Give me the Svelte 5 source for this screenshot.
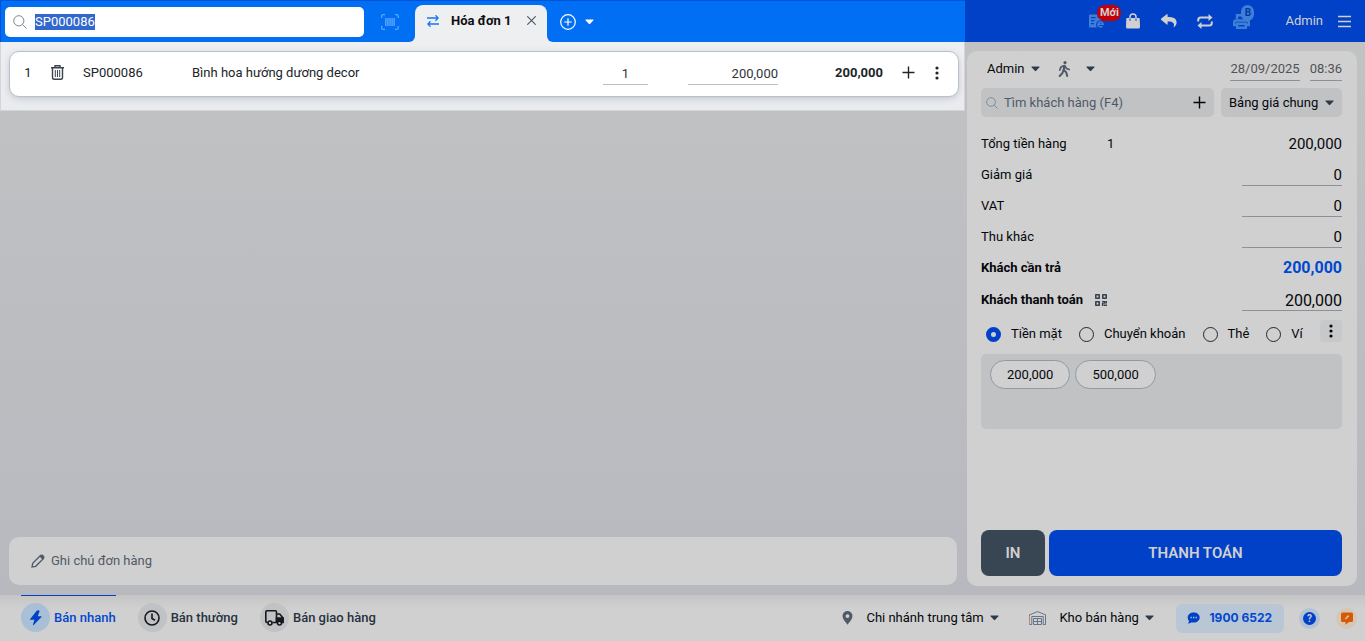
<script lang="ts">
	import { onMount } from 'svelte';

	let keyword: string = $state('SP000086');
	let customer: string = $state('');
	let note: string = $state('');
	let method: string = $state('cash');
	let mode: string = $state('fast');
	let paid: string = $state('200,000');
	let searchBox: HTMLInputElement;

	let item = $state({
		code: 'SP000086',
		name: 'Bình hoa hướng dương decor',
		qty: '1',
		price: '200,000',
		total: '200,000'
	});

	let extras = $state([
		{ id: 'discount', label: 'Giảm giá', value: '0' },
		{ id: 'vat', label: 'VAT', value: '0' },
		{ id: 'other', label: 'Thu khác', value: '0' }
	]);

	const methods = [
		{ id: 'cash', label: 'Tiền mặt' },
		{ id: 'transfer', label: 'Chuyển khoản' },
		{ id: 'card', label: 'Thẻ' },
		{ id: 'wallet', label: 'Ví' }
	];

	const suggestions = ['200,000', '500,000'];

	const modes = [
		{ id: 'fast', label: 'Bán nhanh' },
		{ id: 'normal', label: 'Bán thường' },
		{ id: 'delivery', label: 'Bán giao hàng' }
	];

	onMount(() => {
		searchBox.focus();
		searchBox.select();
	});
</script>

{#snippet caret()}
	<svg class="caret" width="9" height="6" viewBox="0 0 9 6" aria-hidden="true">
		<path d="M1 0.5h7q1 0 .4.8L5.2 4.8q-.7.7-1.4 0L.6 1.3Q0 .5 1 .5z" fill="currentColor" />
	</svg>
{/snippet}

{#snippet magnifier(size: number)}
	<svg width={size} height={size} viewBox="0 0 14 14" fill="none" stroke="#7b8492" aria-hidden="true">
		<circle cx="5.8" cy="5.8" r="5.1" />
		<path d="M9.5 9.5l4 4" />
	</svg>
{/snippet}

{#snippet dots()}
	<svg width="4" height="14" viewBox="0 0 4 14" fill="currentColor" aria-hidden="true">
		<circle cx="2" cy="2" r="1.6" />
		<circle cx="2" cy="7" r="1.6" />
		<circle cx="2" cy="12" r="1.6" />
	</svg>
{/snippet}

{#snippet plus()}
	<svg width="13" height="13" viewBox="0 0 13 13" stroke="currentColor" stroke-width="1.4" aria-hidden="true">
		<path d="M6.5 0.5v12M0.5 6.5h12" />
	</svg>
{/snippet}

<div class="page">
	<header>
		<div class="bar">
			<div class="bar-search">
				<label class="search">
					{@render magnifier(14)}
					<input bind:this={searchBox} bind:value={keyword} aria-label="Tìm hàng hóa" />
				</label>
				<button class="scan" aria-label="Quét mã vạch">
					<svg width="18" height="16" viewBox="0 0 18 16" fill="none" stroke="#5ba6ff" aria-hidden="true">
						<path d="M.7 4V2.2Q.7.7 2.2.7H4M14 .7h1.800q1.500 0 1.500 1.500V4M17.300 12v1.800q0 1.500-1.500 1.500H14M4 15.300H2.200q-1.500 0-1.500-1.500V12" stroke-width="1.3" />
						<path d="M4.800 4v8M6.900 4v8M9 4v8M11.100 4v8M13.200 4v8" stroke-width="1.4" />
					</svg>
				</button>
			</div>
			<div class="tab-slot">
				<div class="tab">
					<svg width="12" height="12" viewBox="0 0 12 12" fill="none" stroke="#1a76f2" stroke-width="1.3" aria-hidden="true">
						<path d="M0 3h11.200M8.500.3l2.700 2.700-2.700 2.700M12 9H.8M3.500 6.300L.8 9l2.700 2.700" />
					</svg>
					<strong>Hóa đơn 1</strong>
					<button class="plain" aria-label="Đóng">
						<svg width="9" height="9" viewBox="0 0 9 9" stroke="#4b5560" stroke-width="1.1" aria-hidden="true">
							<path d="M.3.3l8.400 8.400M8.700.3L.3 8.700" />
						</svg>
					</button>
				</div>
			</div>
			<div class="bar-rest">
				<button class="plain" aria-label="Thêm hóa đơn">
					<svg width="16" height="16" viewBox="0 0 16 16" fill="none" stroke="#fff" stroke-width="1.2" aria-hidden="true">
						<circle cx="8" cy="8" r="7.300" />
						<path d="M8 4.200v7.600M4.200 8h7.600" />
					</svg>
				</button>
				<button class="plain" aria-label="Chọn loại hóa đơn">{@render caret()}</button>
			</div>
		</div>

		<div class="tools">
			<button class="tool" aria-label="Hóa đơn điện tử">
				<svg width="16" height="14" viewBox="0 0 16 14" fill="#3f7fd6" aria-hidden="true">
					<path d="M1 .5h6.500q1 0 1 1V4H12v2.200A4.500 4.500 0 0 0 8 13.500H1q-1 0-1-1v-11q0-1 1-1zM2 3v1.200h4.500V3zM2 6v1.200h3.500V6zM2 9v1.200h3V9z" fill-rule="evenodd" />
					<path d="M9 10.300h5.200a2.600 2.600 0 1 0-.7 2" fill="none" stroke="#3f7fd6" stroke-width="1.500" />
				</svg>
				<span class="badge new">Mới</span>
			</button>
			<button class="tool" aria-label="Đặt hàng">
				<svg width="14" height="16" viewBox="0 0 14 16" aria-hidden="true">
					<path d="M1 5h12q.6 0 .7.700L14 14q0 1.500-1.500 1.500h-11Q0 15.500 0 14l.3-8.300Q.4 5 1 5z" fill="#d0d0d0" />
					<path d="M4 7.500V4a3 3 0 0 1 6 0v3.500" fill="none" stroke="#d0d0d0" stroke-width="1.500" />
					<path d="M4 5.500v2.300M10 5.500v2.300" stroke="#0041c8" />
				</svg>
			</button>
			<button class="tool" aria-label="Trả hàng">
				<svg width="16" height="14" viewBox="0 0 16 14" fill="#d0d0d0" aria-hidden="true">
					<path d="M.3 4.500L5.800.2q.8-.5.8.5V3c5 0 9 1 9 5.500 0 2-1.200 3.700-2.500 4.700q-.6.400-.4-.4C14 8.500 11 7.500 6.600 7.500V10q0 1-.8.400L.3 6q-.8-.7 0-1.500z" />
				</svg>
			</button>
			<button class="tool" aria-label="Đồng bộ">
				<svg width="16" height="15" viewBox="0 0 16 15" fill="none" stroke="#d0d0d0" stroke-width="2" aria-hidden="true">
					<path d="M1.200 7.500V6q0-2.500 2.500-2.500H12M14.800 7.500V9q0 2.500-2.500 2.500H4" />
					<path d="M11.500 0L15.500 3.500l-4 3.500zM4.500 8L.5 11.500l4 3.500z" fill="#d0d0d0" stroke="none" />
				</svg>
			</button>
			<button class="tool" aria-label="In tự động">
				<svg width="17" height="15" viewBox="0 0 17 15" fill="none" stroke="#3f7fd6" stroke-width="2.400" aria-hidden="true">
					<path d="M4 5V1.200h6" />
					<path d="M4 11H1.200V8.500q0-2 2-2h10.600q2 0 2 2V11h-3M4.200 9.800h8.600v3.900H4.200z" />
				</svg>
				<span class="badge print">B</span>
			</button>
			<span class="user">Admin</span>
			<button class="plain" aria-label="Menu">
				<svg width="13" height="13" viewBox="0 0 13 13" stroke="#d0d0d0" stroke-width="1.500" aria-hidden="true">
					<path d="M0 1.500h13M0 6.500h13M0 11.500h13" />
				</svg>
			</button>
		</div>
	</header>

	<main>
		<section class="order">
			<div class="cart">
				<div class="line">
					<span class="no">1</span>
					<button class="plain" aria-label="Xóa">
						<svg width="13" height="15" viewBox="0 0 13 15" fill="none" stroke="#3b434d" aria-hidden="true">
							<path d="M0 2.700h13M4 2.500V.8h5v1.700" stroke-width="1.400" />
							<path d="M1.500 3v9.500q0 1.800 1.800 1.800h6.400q1.800 0 1.800-1.800V3" stroke-width="1.400" />
							<path d="M4.300 5v7M6.500 5v7M8.700 5v7" />
						</svg>
					</button>
					<span class="code">{item.code}</span>
					<span>{item.name}</span>
					<input class="qty" bind:value={item.qty} aria-label="Số lượng" />
					<input class="price" bind:value={item.price} aria-label="Đơn giá" />
					<strong class="total">{item.total}</strong>
					<span class="actions">
						<button class="plain" aria-label="Thêm dòng">{@render plus()}</button>
						<button class="plain" aria-label="Tùy chọn">{@render dots()}</button>
					</span>
				</div>
			</div>
			<div class="space"></div>
			<label class="note">
				<svg width="14" height="14" viewBox="0 0 14 14" fill="none" stroke="#505a66" stroke-width="1.300" aria-hidden="true">
					<path d="M1 13l.7-3.700L9.500 1.500l3 3-7.800 7.800z" />
					<path d="M8.500 2.500l3 3L13.200 3.800q.8-.8 0-1.600L11.800.8q-.8-.8-1.600 0z" fill="#505a66" stroke="none" />
				</svg>
				<input bind:value={note} placeholder="Ghi chú đơn hàng" aria-label="Ghi chú đơn hàng" />
			</label>
		</section>

		<aside>
			<div class="meta">
				<label class="pick">
					<select aria-label="Người bán"><option>Admin</option></select>
					{@render caret()}
				</label>
				<button class="plain channel" aria-label="Kênh bán">
					<svg width="12" height="16" viewBox="0 0 12 16" aria-hidden="true">
						<circle cx="7" cy="1.600" r="1.600" fill="#505a66" />
						<path d="M6.300 4.800L5.600 9l2.600 2.300L9.200 15M5.300 9.500L4.500 12l-2.800 3" fill="none" stroke="#505a66" stroke-width="2" stroke-linecap="round" />
						<path d="M6 4.800L3 6l-1.200 3M7 5.200l1.500 2.300 2.700 1" fill="none" stroke="#505a66" stroke-width="1.700" stroke-linecap="round" />
						<path d="M5.200 4.500h2.300l-.8 5H4.800z" fill="#505a66" />
					</svg>
					{@render caret()}
				</button>
				<button class="when">28/09/2025</button>
				<button class="when">08:36</button>
			</div>

			<div class="client">
				<label class="find">
					{@render magnifier(12)}
					<input bind:value={customer} placeholder="Tìm khách hàng (F4)" aria-label="Tìm khách hàng" />
					<button class="plain" aria-label="Thêm khách hàng">{@render plus()}</button>
				</label>
				<label class="pick book">
					<select aria-label="Bảng giá"><option>Bảng giá chung</option></select>
					{@render caret()}
				</label>
			</div>

			<div class="sums">
				<div class="row">
					<span class="first">Tổng tiền hàng</span>
					<span>1</span>
					<span class="amount">200,000</span>
				</div>
				{#each extras as extra (extra.id)}
					<div class="row">
						<label for={extra.id}>{extra.label}</label>
						<input id={extra.id} bind:value={extra.value} />
					</div>
				{/each}
				<div class="row due">
					<strong>Khách cần trả</strong>
					<strong class="amount">200,000</strong>
				</div>
				<div class="row paid">
					<label for="paid">Khách thanh toán</label>
					<svg width="12" height="12" viewBox="0 0 12 12" fill="none" stroke="#36424f" stroke-width="1.600" aria-hidden="true">
						<path d="M.8.800h3.400v3.400H.8zM7.800.800h3.400v3.400H7.800zM.8 7.800h3.400v3.400H.8z" stroke-linejoin="round" />
						<path d="M7 7.700h2.500v2M11.300 7v2.500M7.700 9v3M9 11.300h3" />
					</svg>
					<input id="paid" bind:value={paid} />
				</div>
			</div>

			<div class="methods">
				{#each methods as m (m.id)}
					<label>
						<input type="radio" name="method" value={m.id} bind:group={method} />
						{m.label}
					</label>
				{/each}
				<button class="more" aria-label="Thêm phương thức">{@render dots()}</button>
			</div>

			<div class="quick">
				{#each suggestions as amount}
					<button onclick={() => (paid = amount)}>{amount}</button>
				{/each}
			</div>

			<div class="submit">
				<button class="print-btn">IN</button>
				<button class="pay-btn">THANH TOÁN</button>
			</div>
		</aside>
	</main>

	<footer>
		<nav>
			{#each modes as m (m.id)}
				<button class="mode" class:active={mode === m.id} onclick={() => (mode = m.id)}>
					<span class="disc">
						{#if m.id === 'fast'}
							<svg width="14" height="16" viewBox="0 0 14 16" fill="#0041c8" aria-hidden="true">
								<path d="M7.500 1L1 9.200q-.3.600.4.600h4L4 14.500q-.1 1 .7.400L12.500 7q.4-.7-.4-.8H8.700L10.500 1.500q.2-.8-.5-1-1.500-.5-2.500.5z" />
							</svg>
						{:else if m.id === 'normal'}
							<svg width="16" height="16" viewBox="0 0 16 16" fill="none" stroke="#15181f" stroke-width="1.600" aria-hidden="true">
								<circle cx="8" cy="8" r="7" />
								<path d="M8 3.500v5l3 1.800" />
							</svg>
						{:else}
							<svg width="19" height="16" viewBox="0 0 19 16" fill="none" stroke="#15181f" stroke-width="1.600" aria-hidden="true">
								<path d="M2.500 12.500H2q-1.200 0-1.200-1.200V2Q.8.800 2 .8h8.300q1.200 0 1.200 1.200v10.500H7.500M11.500 4h3.200l3.300 4v4.500h-1" />
								<path d="M11.500 8H18v4h-2a2.300 2.300 0 0 0-3.500 0h-1z" fill="#15181f" />
								<circle cx="5" cy="13" r="2" />
								<circle cx="14.500" cy="13" r="2" />
							</svg>
						{/if}
					</span>
					{m.label}
				</button>
			{/each}
		</nav>

		<div class="places">
			<label class="pick">
				<svg width="11" height="14" viewBox="0 0 11 14" aria-hidden="true">
					<path d="M5.500 0a5 5 0 0 1 5 5c0 3-3 6-5 8.700C3.500 11 .5 8 .5 5a5 5 0 0 1 5-5zm0 3.200a1.900 1.900 0 1 0 0 3.800 1.900 1.900 0 0 0 0-3.800z" fill="#505a66" />
				</svg>
				<select aria-label="Chi nhánh"><option>Chi nhánh trung tâm</option></select>
				{@render caret()}
			</label>
			<label class="pick stock">
				<svg width="17" height="14" viewBox="0 0 17 14" fill="none" stroke="#66758c" aria-hidden="true">
					<path d="M.5 13.500V3.800L8.500.6l8 3.200v9.700h-2.300V5.500H2.800v8z" />
					<path d="M4.500 13.500v-6h8v6zM4.500 10.500h8M8.500 7.500v6" />
					<path d="M.5 5v8.500" stroke="#b98b63" />
				</svg>
				<select aria-label="Kho"><option>Kho bán hàng</option></select>
				{@render caret()}
			</label>
		</div>

		<a class="hotline" href="tel:19006522">
			<svg width="13" height="12" viewBox="0 0 13 12" aria-hidden="true">
				<path d="M6.700.5c3.500 0 6 2.100 6 5s-2.500 5-6 5q-1 0-2-.3-1.700 1.300-4 1.300 1.200-1 1.300-2.500Q.7 7.500.7 5.500c0-2.900 2.500-5 6-5z" fill="#0041c8" />
				<path d="M3.500 5.500h1.300M6 5.500h1.300M8.500 5.500h1.300" stroke="#b8c6d6" stroke-width="1.300" />
			</svg>
			1900 6522
		</a>
		<button class="round help" aria-label="Trợ giúp"><span>?</span></button>
		<button class="round feedback" aria-label="Góp ý">
			<svg width="12" height="13" viewBox="0 0 12 13" aria-hidden="true">
				<path d="M1.500.5h9q1.500 0 1.500 1.500v6.500q0 1.500-1.500 1.500H8L4.500 12.800V10h-3Q0 10 0 8.500V2Q0 .5 1.500.5z" fill="#d65a06" />
				<path d="M4.300 7l3.400-3.400" stroke="#d9c2b0" stroke-width="1.500" />
			</svg>
		</button>
	</footer>
</div>

<style>
	:global(body) {
		background: #bcbdc0;
	}

	.page {
		display: flex;
		flex-direction: column;
		min-height: 100vh;
		font-family: Roboto, 'Liberation Sans', sans-serif;
		font-size: 13px;
		line-height: 16px;
		color: #05070b;
	}

	svg {
		display: block;
		flex: none;
	}

	input,
	button,
	select {
		box-sizing: border-box;
		min-width: 0;
		margin: 0;
		padding: 0;
		border: 0;
		outline: 0;
		background: none;
		font: inherit;
		color: inherit;
	}

	input::placeholder {
		color: #505a66;
		opacity: 1;
	}

	select {
		appearance: none;
	}

	button {
		cursor: pointer;
	}

	.plain {
		display: flex;
		align-items: center;
		justify-content: center;
	}

	.caret {
		color: #2f3b48;
	}

	/* header */
	header {
		display: grid;
		grid-template-columns: 1fr 400px;
		height: 42px;
		background: #0041c8;
	}

	.bar {
		display: flex;
		box-sizing: border-box;
		border-top: 1px solid #0052d9;
		border-left: 1px solid #0052d9;
		background: #eeeff1;
	}

	.bar-search,
	.bar-rest {
		display: flex;
		align-items: center;
		background: #006ff4;
	}

	.bar-search {
		padding-left: 4px;
		border-bottom-right-radius: 6px;
	}

	.search {
		display: flex;
		align-items: center;
		gap: 8px;
		box-sizing: border-box;
		width: 359px;
		height: 30px;
		padding: 0 8px;
		border-radius: 5px;
		background: #fff;
	}

	.search input {
		flex: 1;
		color: #1b1d21;
	}

	.search input::selection {
		background: #3267cd;
		color: #fff;
	}

	.scan {
		display: flex;
		align-items: center;
		justify-content: center;
		width: 51px;
	}

	.tab-slot {
		padding-top: 4px;
		background: linear-gradient(#006ff4, #006ff4) top / 100% 24px no-repeat;
	}

	.tab {
		display: flex;
		align-items: center;
		box-sizing: border-box;
		width: 132px;
		height: 37px;
		padding: 0 11px 6px 12px;
		border-radius: 8px 8px 0 0;
		background: #eeeff1;
		color: #0d0e10;
	}

	.tab strong {
		flex: 1;
		padding-left: 12px;
	}

	.bar-rest {
		flex: 1;
		gap: 9px;
		padding-left: 13px;
		border-bottom-left-radius: 6px;
	}

	.bar-rest .caret {
		color: #fff;
	}

	.tools {
		display: flex;
		align-items: center;
		justify-content: flex-end;
		padding-right: 14px;
		color: #d0d0d0;
	}

	.tool {
		position: relative;
		display: flex;
		align-items: center;
		justify-content: center;
		width: 36px;
		height: 40px;
	}

	.badge {
		position: absolute;
		border-radius: 8px;
		font-weight: 700;
		line-height: 16px;
	}

	.new {
		top: 4px;
		left: 18px;
		width: 24px;
		background: #c40006;
		font-size: 11px;
	}

	.print {
		top: 4px;
		left: 18px;
		width: 13px;
		background: #3f7fd6;
		font-size: 10px;
		color: #0037a8;
	}

	.user {
		padding: 0 15px 0 26px;
	}

	/* order */
	main {
		display: grid;
		flex: 1;
		grid-template-columns: 1fr 400px;
		background: linear-gradient(#c1c2c3, #b8b9bf);
	}

	.order {
		display: flex;
		flex-direction: column;
	}

	.cart {
		padding: 9px 5px 13px 8px;
		border: solid #d4d5d8;
		border-width: 0 1px 1px;
		background: linear-gradient(#eeeff1, #eaebee);
	}

	.line {
		display: grid;
		grid-template-columns: 36px 22px 124px 1fr 45px 130px 105px 75px;
		align-items: center;
		box-sizing: border-box;
		height: 46px;
		padding-bottom: 3px;
		border: 1px solid #bac0ca;
		border-radius: 10px;
		background: #fff;
		box-shadow: 0 2px 6px #c5c9d2;
		color: #212429;
	}

	.no {
		text-align: center;
	}

	.code {
		padding-left: 15px;
	}

	.qty,
	.price {
		height: 23px;
		margin-top: 2px;
		border-bottom: 1px solid #bac0ca;
		color: #30343a;
	}

	.qty {
		text-align: center;
	}

	.price {
		margin-left: 40px;
		text-align: right;
	}

	.total {
		text-align: right;
	}

	.actions {
		display: grid;
		grid-template-columns: 28px 28px;
		justify-content: center;
		padding-left: 4px;
	}

	.space {
		flex: 1;
	}

	.note {
		display: flex;
		align-items: center;
		gap: 6px;
		height: 48px;
		margin: 0 8px 10px 9px;
		padding: 0 22px;
		border-radius: 10px;
		background: #d0d0d0;
	}

	.note input {
		flex: 1;
	}

	/* payment */
	aside {
		display: flex;
		flex-direction: column;
		margin: 9px 8px 9px 2px;
		padding: 5px 15px 10px 14px;
		border-radius: 10px;
		background: #d0d0d0;
	}

	.meta {
		display: flex;
		align-items: center;
		height: 26px;
		margin-bottom: 6px;
		padding-left: 6px;
	}

	.pick {
		display: flex;
		align-items: center;
		gap: 6px;
	}

	.channel {
		gap: 16px;
		margin: 0 auto 0 18px;
	}

	.when {
		height: 23px;
		margin-left: 10px;
		border-bottom: 1px solid #8b919a;
		color: #505357;
	}

	.client {
		display: flex;
		gap: 7px;
		height: 29px;
		margin-bottom: 11px;
	}

	.find,
	.book {
		border-radius: 5px;
		background: #c1c2c4;
	}

	.find {
		display: flex;
		flex: 1;
		align-items: center;
		gap: 6px;
		padding: 0 8px 0 5px;
	}

	.find input {
		flex: 1;
	}

	.book {
		padding: 0 8px;
	}

	.row {
		display: flex;
		align-items: center;
		height: 31px;
	}

	.row input {
		width: 100px;
		height: 23px;
		margin-left: auto;
		padding-top: 2px;
		border-bottom: 1px solid #8b919a;
		font-size: 15px;
		text-align: right;
	}

	.first {
		width: 126px;
	}

	.amount {
		margin-left: auto;
		font-size: 15px;
	}

	.due .amount {
		font-size: 16px;
		color: #0048cf;
	}

	.paid {
		height: 33px;
	}

	.paid label {
		margin-right: 12px;
		font-weight: 700;
	}

	.paid input {
		font-size: 16px;
	}

	.methods {
		display: flex;
		align-items: center;
		height: 28px;
		margin: 4px 0 6px;
		padding-left: 5px;
	}

	.methods label {
		display: flex;
		align-items: center;
		gap: 10px;
		margin-right: 17px;
	}

	.methods input {
		appearance: none;
		width: 15px;
		height: 15px;
		border: 1px solid #22272e;
		border-radius: 50%;
	}

	.methods input:checked {
		border: 5px solid #0041c8;
	}

	.more {
		display: flex;
		align-items: center;
		justify-content: center;
		align-self: flex-start;
		width: 22px;
		height: 22px;
		margin-left: auto;
		border-radius: 3px;
		background: #c7c8ca;
	}

	.quick {
		display: flex;
		align-items: flex-start;
		gap: 5px;
		box-sizing: border-box;
		height: 75px;
		padding: 6px 9px;
		border-radius: 5px;
		background: #c1c2c4;
	}

	.quick button {
		height: 29px;
		padding: 0 16px;
		border: 1px solid #9299a3;
		border-radius: 15px;
		background: #d0d0d0;
	}

	.submit {
		display: flex;
		gap: 4px;
		height: 46px;
		margin-top: auto;
		padding-top: 16px;
	}

	.submit button {
		border-radius: 8px;
		font-size: 15px;
		font-weight: 600;
		color: #d0d0d0;
	}

	.submit .print-btn {
		width: 64px;
		background: #384553;
	}

	.submit .pay-btn {
		flex: 1;
		background: #0041c8;
	}

	/* footer */
	footer {
		display: flex;
		align-items: center;
		height: 46px;
		padding: 0 8px 0 21px;
		background: linear-gradient(#c5c5c6, #d0d0d0 14px);
	}

	nav {
		display: flex;
		gap: 22px;
		height: 100%;
		margin-right: auto;
	}

	.mode {
		display: flex;
		align-items: center;
		gap: 4px;
		padding-bottom: 1px;
		font-weight: 500;
		color: #27323e;
	}

	.mode.active {
		box-shadow: inset 0 1px #0041c8;
		color: #0048cf;
	}

	.disc {
		display: flex;
		align-items: center;
		justify-content: center;
		width: 29px;
		height: 29px;
		border-radius: 50%;
		background: #c1c2c4;
	}

	.active .disc {
		background: #a9bfd6;
	}

	.places {
		display: flex;
		gap: 30px;
		margin-right: 22px;
	}

	.places .pick svg:first-child {
		margin-right: 7px;
	}

	.hotline {
		display: flex;
		align-items: center;
		gap: 9px;
		height: 29px;
		margin-right: 15px;
		padding: 0 12px 0 11px;
		border-radius: 6px;
		background: #b8c6d6;
		font-family: Inter, Roboto, sans-serif;
		font-size: 12px;
		font-weight: 700;
		color: #0048cf;
		text-decoration: none;
	}

	.round {
		display: flex;
		align-items: center;
		justify-content: center;
		width: 21px;
		height: 21px;
		border-radius: 50%;
	}

	.help {
		margin-right: 16px;
		background: #b4c3d4;
	}

	.help span {
		width: 13px;
		height: 13px;
		border-radius: 50%;
		background: #0041c8;
		font-size: 10px;
		font-weight: 700;
		line-height: 13px;
		color: #d0d0d0;
	}

	.feedback {
		background: #d5c6b6;
	}
</style>
